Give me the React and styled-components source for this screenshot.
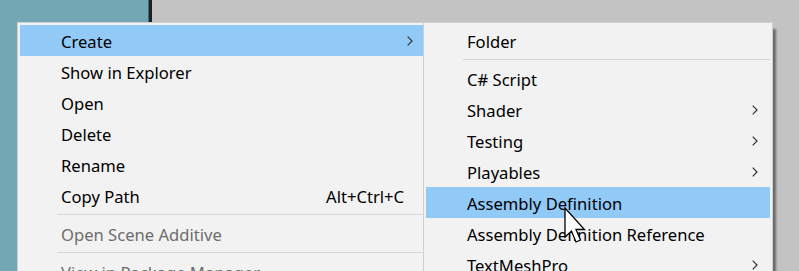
import React from "react";
import styled, { createGlobalStyle } from "styled-components";

const GlobalStyle = createGlobalStyle`
    html, body {
        margin: 0;
        padding: 0;
        overflow: hidden;
    }
    body {
        font-family: "Noto Sans", "Liberation Sans", sans-serif;
    }
`;

const Desktop = styled.div`
    position: relative;
    display: flex;
    width: 799px;
    height: 271px;
    overflow: hidden;
`;

const TealPane = styled.div`
    width: 148px;
    background-color: #73a7b3;
`;

const Divider = styled.div`
    width: 3px;
    background-color: #1f1f1f;
    border-left: 1px solid #3f6f78;
`;

const GrayPane = styled.div`
    flex: 1;
    background-color: #c3c3c3;
`;

const Menu = styled.div`
    position: absolute;
    top: 22px;
    left: ${(props) => props.left}px;
    width: ${(props) => props.width}px;
    box-sizing: border-box;
    padding: 2px;
    background-color: #f2f2f2;
    border: 1px solid #cfcfcf;
    box-shadow: ${(props) =>
        props.shadow ? "4px 6px 2px -1px rgba(0, 0, 0, 0.45)" : "none"};
    display: flex;
    flex-direction: column;
`;

const Row = styled.div`
    position: relative;
    display: flex;
    align-items: center;
    height: 31px;
    padding-left: 41px;
    padding-right: 12px;
    font-size: 16.6px;
    color: ${(props) => (props.disabled ? "#6d6d6d" : "#000000")};
    background-color: ${(props) => (props.active ? "#91c9f7" : "transparent")};
    white-space: nowrap;
`;

const Label = styled.span`
    flex: 1;
    padding-top: 1px;
`;

const Shortcut = styled.span`
    padding-top: 1px;
    padding-right: 9px;
`;

const Separator = styled.div`
    height: 7px;
    display: flex;
    align-items: center;
    padding-left: 37px;

    &::after {
        content: "";
        flex: 1;
        height: 1px;
        background-color: #d7d7d7;
    }
`;

const Chevron = () => (
    <svg width="6" height="10" viewBox="0 0 6 10">
        <path d="M0.7 0.7 L5 5 L0.7 9.3" fill="none" stroke="#333" strokeWidth="1.2" />
    </svg>
);

const Cursor = styled.svg`
    position: absolute;
    left: 564px;
    top: 207px;
`;

const mainItems = [
    { label: "Create", active: true, sub: true },
    { label: "Show in Explorer" },
    { label: "Open" },
    { label: "Delete" },
    { label: "Rename" },
    { label: "Copy Path", shortcut: "Alt+Ctrl+C" },
    { sep: true },
    { label: "Open Scene Additive", disabled: true },
    { sep: true },
    { label: "View in Package Manager", disabled: true },
];

const createItems = [
    { label: "Folder" },
    { sep: true },
    { label: "C# Script" },
    { label: "Shader", sub: true },
    { label: "Testing", sub: true },
    { label: "Playables", sub: true },
    { label: "Assembly Definition", active: true },
    { label: "Assembly Definition Reference" },
    { label: "TextMeshPro", sub: true },
];

const renderItems = (items) =>
    items.map((item, i) =>
        item.sep ? (
            <Separator key={i} />
        ) : (
            <Row key={i} active={item.active} disabled={item.disabled}>
                <Label>{item.label}</Label>
                {item.shortcut && <Shortcut>{item.shortcut}</Shortcut>}
                {item.sub && <Chevron />}
            </Row>
        )
    );

const App = () => {
    return (
        <>
            <GlobalStyle />
            <Desktop>
                <TealPane />
                <Divider />
                <GrayPane />
                <Menu left={17} width={411}>
                    {renderItems(mainItems)}
                </Menu>
                <Menu left={423} width={350} shadow>
                    {renderItems(createItems)}
                </Menu>
                <Cursor width="22" height="38" viewBox="0 0 22 38">
                    <path
                        d="M1 1 L1 30 L7.5 24 L12 35 L16.5 33 L12 22.5 L20.5 22.5 Z"
                        fill="#ffffff"
                        stroke="#000000"
                        strokeWidth="1.3"
                        strokeLinejoin="miter"
                    />
                </Cursor>
            </Desktop>
        </>
    );
};

export default App;
